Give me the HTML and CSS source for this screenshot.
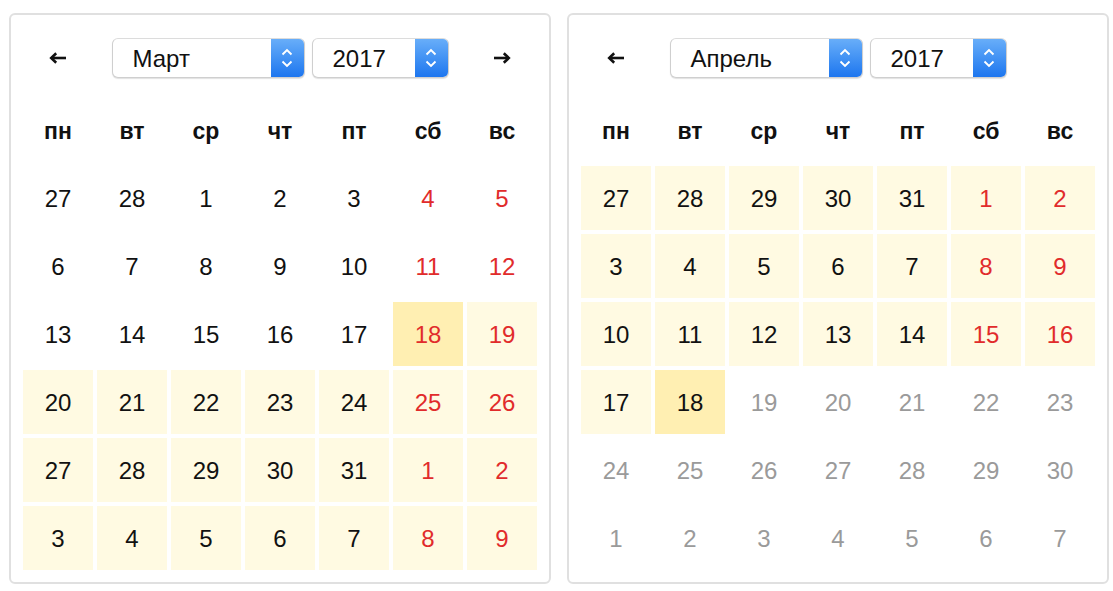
FILE: index.html
```html
<!DOCTYPE html>
<html lang="ru">
<head>
    <meta charset="UTF-8">
    <meta name="viewport" content="width=device-width, initial-scale=1.0">
    <title>Календарь</title>
    <link rel="stylesheet" href="styles.css">
</head>
<body>
    <div class="calendars">
        <div class="calendar">
            <div class="cal-head">
                <span class="nav">
                    <svg width="18" height="12" viewBox="0 0 18 12"><path d="M17 6H3" stroke="#111" stroke-width="2.6" fill="none"/><path d="M7.2 1.2L2.2 6l5 4.8" stroke="#111" stroke-width="2.6" fill="none"/></svg>
                </span>
                <div class="selects">
                    <div class="select month"><span class="select-text">Март</span><span class="select-btn"><svg width="14" height="24" viewBox="0 0 14 24"><path d="M2.5 8.5L7 4l4.5 4.5M2.5 15.5L7 20l4.5-4.5" stroke="#fff" stroke-width="1.9" fill="none"/></svg></span></div>
                    <div class="select year"><span class="select-text">2017</span><span class="select-btn"><svg width="14" height="24" viewBox="0 0 14 24"><path d="M2.5 8.5L7 4l4.5 4.5M2.5 15.5L7 20l4.5-4.5" stroke="#fff" stroke-width="1.9" fill="none"/></svg></span></div>
                </div>
                <span class="nav">
                    <svg width="18" height="12" viewBox="0 0 18 12"><path d="M1 6h14" stroke="#111" stroke-width="2.6" fill="none"/><path d="M10.8 1.2l5 4.8-5 4.8" stroke="#111" stroke-width="2.6" fill="none"/></svg>
                </span>
            </div>
            <div class="grid">
                <div class="wd">пн</div><div class="wd">вт</div><div class="wd">ср</div><div class="wd">чт</div><div class="wd">пт</div><div class="wd">сб</div><div class="wd">вс</div>

                <div class="day">27</div><div class="day">28</div><div class="day">1</div><div class="day">2</div><div class="day">3</div><div class="day red">4</div><div class="day red">5</div>
                <div class="day">6</div><div class="day">7</div><div class="day">8</div><div class="day">9</div><div class="day">10</div><div class="day red">11</div><div class="day red">12</div>
                <div class="day">13</div><div class="day">14</div><div class="day">15</div><div class="day">16</div><div class="day">17</div><div class="day red sel">18</div><div class="day red in">19</div>
                <div class="day in">20</div><div class="day in">21</div><div class="day in">22</div><div class="day in">23</div><div class="day in">24</div><div class="day red in">25</div><div class="day red in">26</div>
                <div class="day in">27</div><div class="day in">28</div><div class="day in">29</div><div class="day in">30</div><div class="day in">31</div><div class="day red in">1</div><div class="day red in">2</div>
                <div class="day in">3</div><div class="day in">4</div><div class="day in">5</div><div class="day in">6</div><div class="day in">7</div><div class="day red in">8</div><div class="day red in">9</div>
            </div>
        </div>

        <div class="calendar">
            <div class="cal-head">
                <span class="nav">
                    <svg width="18" height="12" viewBox="0 0 18 12"><path d="M17 6H3" stroke="#111" stroke-width="2.6" fill="none"/><path d="M7.2 1.2L2.2 6l5 4.8" stroke="#111" stroke-width="2.6" fill="none"/></svg>
                </span>
                <div class="selects">
                    <div class="select month"><span class="select-text">Апрель</span><span class="select-btn"><svg width="14" height="24" viewBox="0 0 14 24"><path d="M2.5 8.5L7 4l4.5 4.5M2.5 15.5L7 20l4.5-4.5" stroke="#fff" stroke-width="1.9" fill="none"/></svg></span></div>
                    <div class="select year"><span class="select-text">2017</span><span class="select-btn"><svg width="14" height="24" viewBox="0 0 14 24"><path d="M2.5 8.5L7 4l4.5 4.5M2.5 15.5L7 20l4.5-4.5" stroke="#fff" stroke-width="1.9" fill="none"/></svg></span></div>
                </div>
                <span class="nav hidden"></span>
            </div>
            <div class="grid">
                <div class="wd">пн</div><div class="wd">вт</div><div class="wd">ср</div><div class="wd">чт</div><div class="wd">пт</div><div class="wd">сб</div><div class="wd">вс</div>

                <div class="day in">27</div><div class="day in">28</div><div class="day in">29</div><div class="day in">30</div><div class="day in">31</div><div class="day red in">1</div><div class="day red in">2</div>
                <div class="day in">3</div><div class="day in">4</div><div class="day in">5</div><div class="day in">6</div><div class="day in">7</div><div class="day red in">8</div><div class="day red in">9</div>
                <div class="day in">10</div><div class="day in">11</div><div class="day in">12</div><div class="day in">13</div><div class="day in">14</div><div class="day red in">15</div><div class="day red in">16</div>
                <div class="day in">17</div><div class="day sel">18</div><div class="day off">19</div><div class="day off">20</div><div class="day off">21</div><div class="day off">22</div><div class="day off">23</div>
                <div class="day off">24</div><div class="day off">25</div><div class="day off">26</div><div class="day off">27</div><div class="day off">28</div><div class="day off">29</div><div class="day off">30</div>
                <div class="day off">1</div><div class="day off">2</div><div class="day off">3</div><div class="day off">4</div><div class="day off">5</div><div class="day off">6</div><div class="day off">7</div>
            </div>
        </div>
    </div>
</body>
</html>
```

FILE: styles.css
```css
body {
    font-family: 'Liberation Sans', Arial, sans-serif;
    background-color: #fff;
    color: #111;
    margin: 0;
    padding: 0;
}

.calendars {
    display: flex;
    gap: 16px;
    padding: 13px 0 0 9px;
}

.calendar {
    width: 514px;
    padding: 12px;
    border: 2px solid #e0e0e0;
    border-radius: 6px;
}

.cal-head {
    display: grid;
    grid-template-columns: 70px 1fr 70px;
    gap: 4px;
    align-items: center;
    height: 62px;
    margin-bottom: 9px;
}

.nav {
    display: flex;
    justify-content: center;
    align-items: center;
    height: 40px;
}

.hidden {
    visibility: hidden;
}

.selects {
    display: flex;
    justify-content: center;
    gap: 7px;
}

.select {
    display: flex;
    align-items: stretch;
    height: 40px;
    box-sizing: border-box;
    background: #fff;
    border: 1px solid #cfcfcf;
    border-top-color: #dcdcdc;
    border-radius: 6px;
    box-shadow: 0 1px 1px rgba(0, 0, 0, 0.12);
    overflow: hidden;
}

.month {
    width: 193px;
}

.year {
    width: 137px;
}

.select-text {
    flex: 1;
    display: flex;
    align-items: center;
    padding: 2px 0 0 20px;
    font-size: 24px;
}

.select-btn {
    width: 33px;
    display: flex;
    justify-content: center;
    align-items: center;
    background: linear-gradient(#68aef9, #1d76ef);
}

.grid {
    display: grid;
    grid-template-columns: repeat(7, 70px);
    grid-auto-rows: 64px;
    gap: 4px;
}

.wd,
.day {
    display: flex;
    justify-content: center;
    align-items: center;
}

.wd {
    font-size: 23px;
    font-weight: bold;
    padding-top: 2px;
}

.day {
    font-size: 24px;
    padding-top: 1px;
}

.red {
    color: #e12b2b;
}

.off {
    color: #9a9a9a;
}

.in {
    background-color: #fffae2;
}

.sel {
    background-color: #ffefb2;
}
```
